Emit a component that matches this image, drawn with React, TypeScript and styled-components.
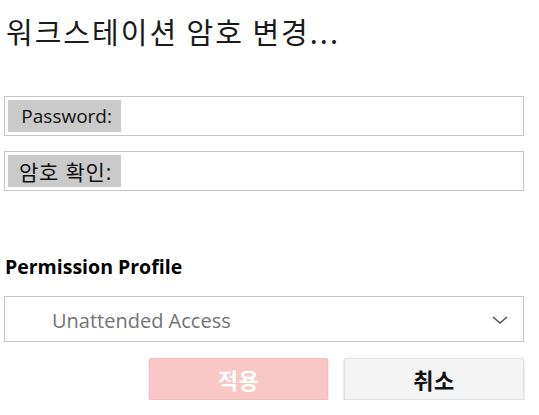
import styled, { createGlobalStyle } from "styled-components";

const GlobalStyle = createGlobalStyle`
  body {
    margin: 0;
    background: #ffffff;
    font-family: "Open Sans", "Noto Sans CJK KR", sans-serif;
  }
`;

const Page = styled.div`
  width: 520px;
  padding: 0 0 0 4px;
  display: flex;
  flex-direction: column;
`;

const Title = styled.h1`
  margin: 12px 0 0 2px;
  font-size: 29px;
  font-weight: 400;
  line-height: 38px;
  letter-spacing: 2px;
  color: #1a1a1a;
  font-family: "Noto Sans CJK KR", sans-serif;
`;

const Fields = styled.div`
  display: flex;
  flex-direction: column;
  gap: 15px;
  margin-top: 46px;
`;

const Field = styled.label`
  display: flex;
  align-items: center;
  height: 40px;
  box-sizing: border-box;
  border: 1px solid #c6c6c6;
  padding: 0 3px;
`;

const FieldLabel = styled.span<{ $ko?: boolean }>`
  width: 113px;
  height: 32px;
  box-sizing: border-box;
  padding-right: 9px;
  background: #cacaca;
  display: flex;
  align-items: center;
  justify-content: flex-end;
  font-size: ${(p) => (p.$ko ? "21px" : "19px")};
  letter-spacing: ${(p) => (p.$ko ? "0.8px" : "0")};
  color: #111111;
  font-family: "Open Sans", "Noto Sans CJK KR", sans-serif;
`;

const FieldInput = styled.input`
  flex: 1;
  border: none;
  outline: none;
  background: transparent;
  font-size: 18px;
`;

const SectionTitle = styled.h2`
  margin: 63px 0 0 1px;
  font-size: 19.5px;
  font-weight: 700;
  line-height: 26px;
  color: #000000;
  font-family: "Open Sans", sans-serif;
`;

const Select = styled.div`
  margin-top: 16px;
  height: 46px;
  box-sizing: border-box;
  border: 1px solid #c6c6c6;
  display: flex;
  align-items: center;
  justify-content: space-between;
  padding: 2px 15px 0 47px;
`;

const SelectValue = styled.span`
  font-size: 20px;
  color: #737373;
  font-family: "Open Sans", sans-serif;
`;

const Actions = styled.div`
  margin-top: 16px;
  display: flex;
  justify-content: flex-end;
  gap: 16px;
`;

const Button = styled.button<{ $primary?: boolean }>`
  width: ${(p) => (p.$primary ? "179px" : "180px")};
  height: 42px;
  border: 1px solid ${(p) => (p.$primary ? "#f3c0be" : "#e2e2e2")};
  border-radius: 2px;
  background: ${(p) => (p.$primary ? "#f9c7c5" : "#f4f4f4")};
  color: ${(p) => (p.$primary ? "#ffffff" : "#111111")};
  box-shadow: 0 1px 2px rgba(0, 0, 0, 0.25);
  font-size: 22px;
  font-weight: 700;
  letter-spacing: 0.5px;
  font-family: "Noto Sans CJK KR", sans-serif;
  cursor: pointer;
`;

const Chevron = () => (
  <svg width="16" height="8" viewBox="0 0 16 8" fill="none">
    <path d="M1 1 L8 7 L15 1" stroke="#555555" strokeWidth="1.6" />
  </svg>
);

const App = () => {
  return (
    <>
      <GlobalStyle />
      <Page>
        <Title>워크스테이션 암호 변경...</Title>
        <Fields>
          <Field>
            <FieldLabel>Password:</FieldLabel>
            <FieldInput type="password" />
          </Field>
          <Field>
            <FieldLabel $ko>암호 확인:</FieldLabel>
            <FieldInput type="password" />
          </Field>
        </Fields>
        <SectionTitle>Permission Profile</SectionTitle>
        <Select>
          <SelectValue>Unattended Access</SelectValue>
          <Chevron />
        </Select>
        <Actions>
          <Button $primary>적용</Button>
          <Button>취소</Button>
        </Actions>
      </Page>
    </>
  );
};

export default App;
